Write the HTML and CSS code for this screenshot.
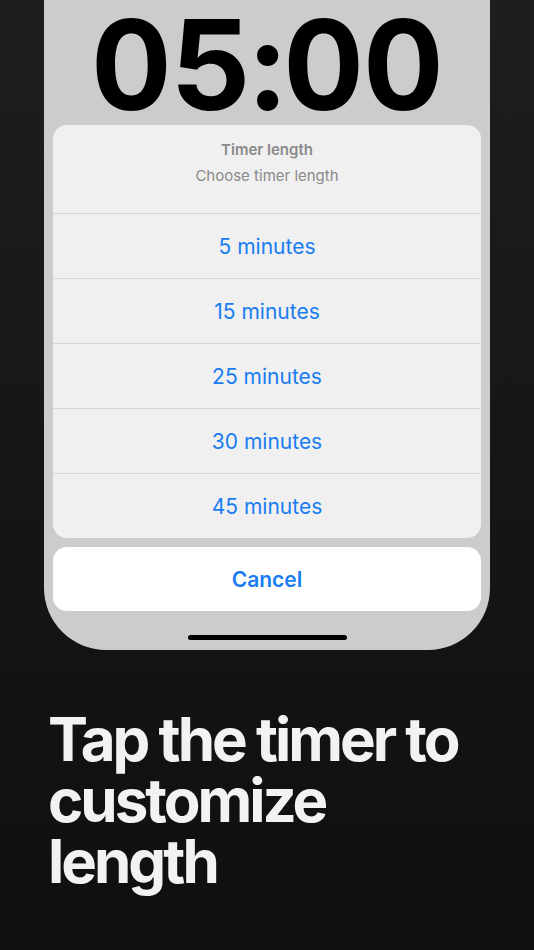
FILE: index.html
```html
<!DOCTYPE html>
<html>
<head>
<meta charset="utf-8">
<link rel="stylesheet" href="styles.css">
</head>
<body>
<div class="page">
  <div class="phone">
    <div class="timer">05:00</div>
    <div class="sheet">
      <div class="sheet-head">
        <div class="sheet-title">Timer length</div>
        <div class="sheet-sub">Choose timer length</div>
      </div>
      <div class="option">5 minutes</div>
      <div class="option">15 minutes</div>
      <div class="option">25 minutes</div>
      <div class="option">30 minutes</div>
      <div class="option">45 minutes</div>
    </div>
    <div class="cancel">Cancel</div>
    <div class="home-bar"></div>
  </div>
  <h1 class="headline">Tap the timer to customize length</h1>
</div>
</body>
</html>
```
FILE: styles.css
```css
html, body {
  margin: 0;
  padding: 0;
}
body {
  width: 534px;
  height: 950px;
  overflow: hidden;
  background: linear-gradient(180deg, #1e1e1e 0%, #161616 50%, #0f0f0f 100%);
  font-family: Inter, "Noto Sans", sans-serif;
}
.page {
  display: flex;
  flex-direction: column;
  height: 950px;
}
.phone {
  margin-left: 44px;
  width: 446px;
  height: 650px;
  box-sizing: border-box;
  padding: 0 9px;
  background: #cccccc;
  border-radius: 0 0 62px 62px;
  display: flex;
  flex-direction: column;
}
.timer {
  height: 125px;
  line-height: 130px;
  font-size: 125px;
  font-weight: 700;
  color: #000;
  text-align: center;
  letter-spacing: -1px;
  font-variant-numeric: tabular-nums;
}
.sheet {
  background: #f0f0f0;
  border-radius: 14px;
  overflow: hidden;
}
.sheet-head {
  height: 88px;
  box-sizing: border-box;
  padding-top: 15px;
  text-align: center;
  color: #8a8a8a;
  font-size: 15px;
}
.sheet-title {
  line-height: 20px;
  font-weight: 600;
}
.sheet-sub {
  line-height: 20px;
  margin-top: 6px;
}
.option {
  height: 64px;
  border-top: 1px solid #d7d7d7;
  display: flex;
  align-items: center;
  justify-content: center;
  color: #1a7cf2;
  font-size: 21px;
}
.cancel {
  margin-top: 9px;
  height: 64px;
  background: #ffffff;
  border-radius: 14px;
  display: flex;
  align-items: center;
  justify-content: center;
  color: #1a7cf2;
  font-size: 21px;
  font-weight: 600;
}
.home-bar {
  align-self: center;
  margin-top: 24px;
  width: 159px;
  height: 5px;
  border-radius: 3px;
  background: #000;
}
.headline {
  margin: 59px 0 0 48px;
  width: 450px;
  font-size: 60px;
  line-height: 61px;
  font-weight: 700;
  letter-spacing: -3px;
  color: #f2f2f2;
}
```
